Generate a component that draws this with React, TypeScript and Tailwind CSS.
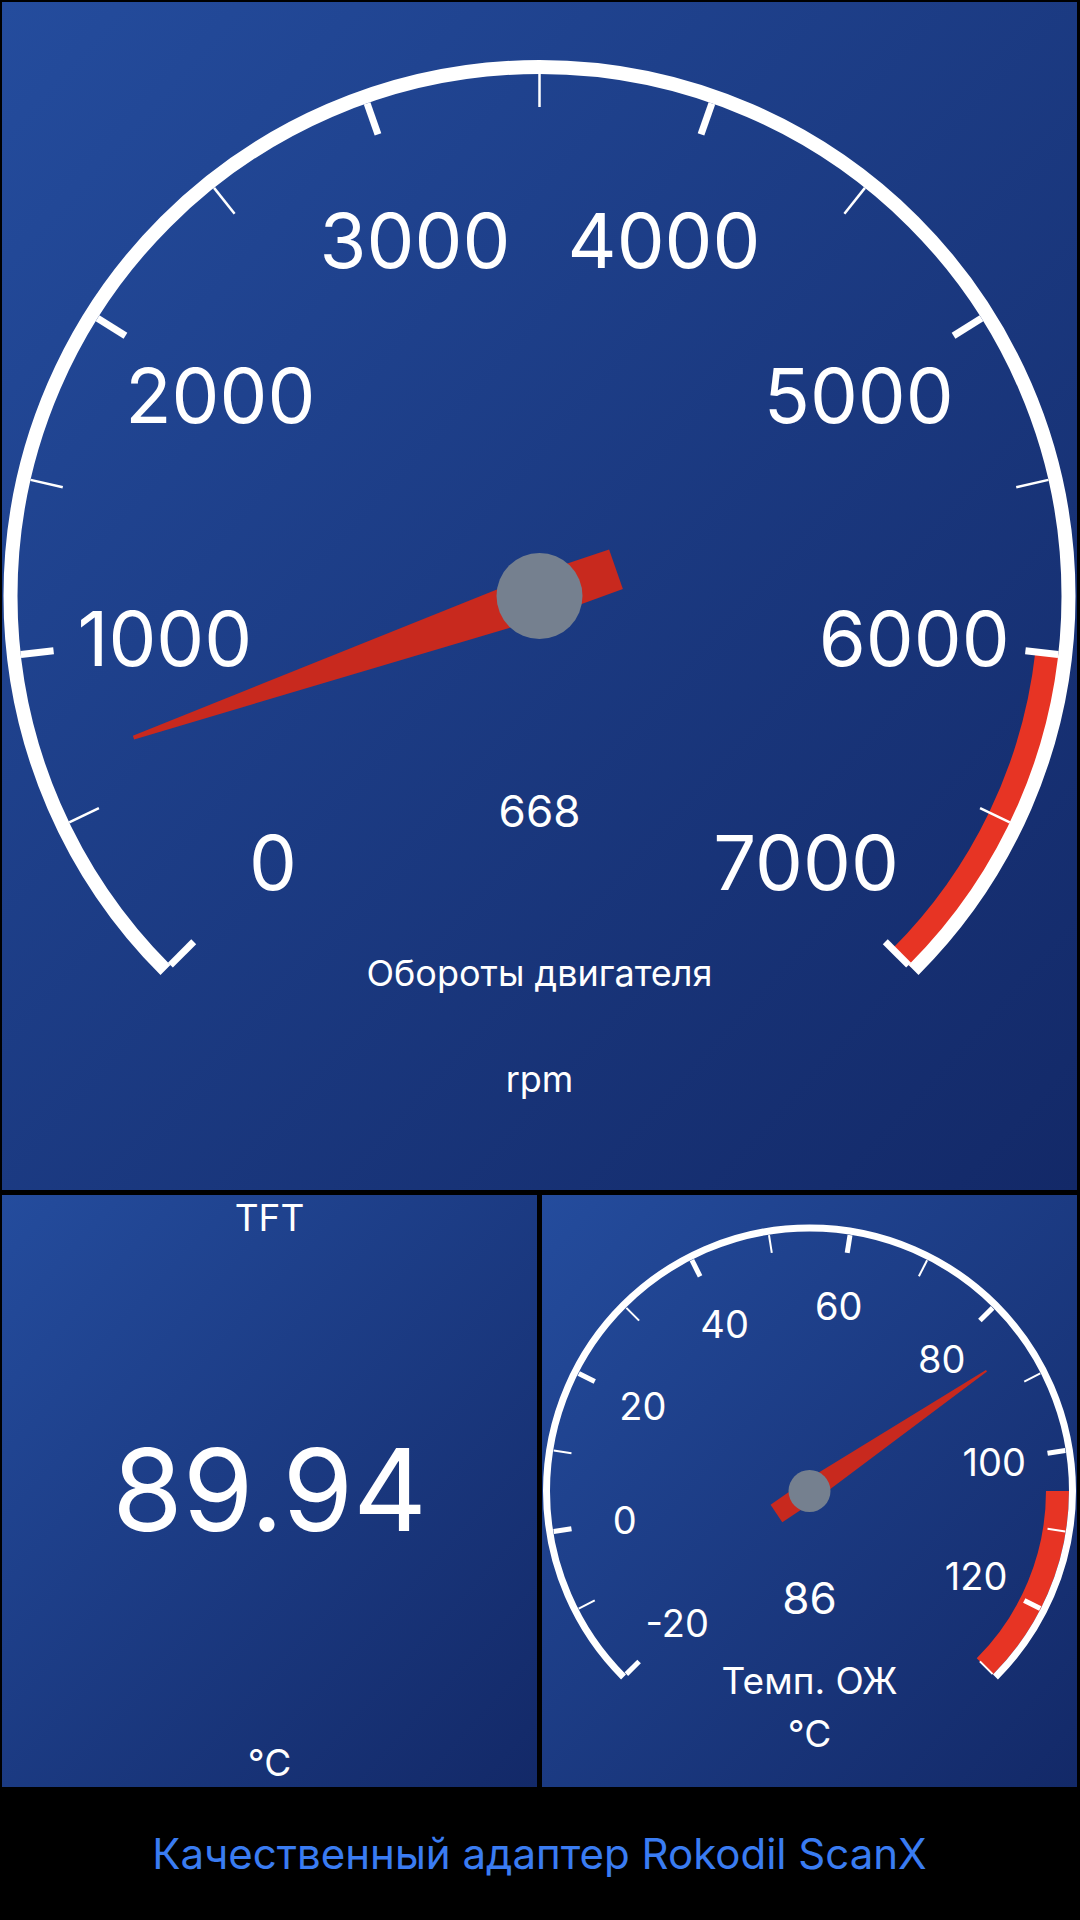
const rad = (d: number) => (d * Math.PI) / 180

type GaugeConfig = {
  w: number
  h: number
  r: number
  stroke: number
  min: number
  max: number
  step: number
  value: number
  redFrom: number
  redR: number
  redW: number
  tickIn: number
  tickOut: number
  majorW: number
  minorW: number
  labelR: number
  labelSize: number
  needleLen: number
  needleTail: number
  needleW: number
  hubR: number
  valueSize: number
  valueDy: number
  title: string
  titleSize: number
  titleDy: number
  unit: string
  unitDy: number
}

const Gauge = ({ g }: { g: GaugeConfig }) => {
  const cx = g.w / 2
  const cy = g.h / 2
  const ang = (v: number) => 225 - ((v - g.min) / (g.max - g.min)) * 270
  const pt = (r: number, a: number) => [cx + r * Math.cos(rad(a)), cy - r * Math.sin(rad(a))]
  const arc = (r: number, a0: number, a1: number) => {
    const [x0, y0] = pt(r, a0)
    const [x1, y1] = pt(r, a1)
    return `M ${x0} ${y0} A ${r} ${r} 0 ${a0 - a1 > 180 ? 1 : 0} 1 ${x1} ${y1}`
  }

  const count = Math.round((g.max - g.min) / g.step)
  const ticks = Array.from({ length: count + 1 }, (_, i) => ({ v: g.min + i * g.step, major: i % 2 === 0 }))

  // needle polygon in local coords (along, across)
  const a = ang(g.value)
  const u = [Math.cos(rad(a)), -Math.sin(rad(a))]
  const n = [Math.sin(rad(a)), Math.cos(rad(a))]
  const hw = g.needleW / 2
  const local = [
    [-g.needleTail, -hw * 0.95],
    [0, -hw],
    [g.needleLen, -hw * 0.09],
    [g.needleLen, hw * 0.09],
    [0, hw],
    [-g.needleTail, hw * 0.95],
  ]
  const needle = local.map(([s, t]) => `${cx + s * u[0] + t * n[0]},${cy + s * u[1] + t * n[1]}`).join(' ')

  return (
    <svg viewBox={`0 0 ${g.w} ${g.h}`} width={g.w} height={g.h} className="block">
      <path d={arc(g.redR, ang(g.redFrom), ang(g.max))} stroke="#e73424" strokeWidth={g.redW} fill="none" />
      <path d={arc(g.r, 225, -45)} stroke="white" strokeWidth={g.stroke} fill="none" />
      {ticks.map((t) => {
        const [x0, y0] = pt(g.tickIn, ang(t.v))
        const [x1, y1] = pt(g.tickOut, ang(t.v))
        return (
          <line key={t.v} x1={x0} y1={y0} x2={x1} y2={y1} stroke="white" strokeWidth={t.major ? g.majorW : g.minorW} />
        )
      })}
      {ticks
        .filter((t) => t.major)
        .map((t) => {
          const [x, y] = pt(g.labelR, ang(t.v))
          return (
            <text key={t.v} x={x} y={y + g.labelSize * 0.3635} fill="white" fontSize={g.labelSize} textAnchor="middle">
              {String(t.v)}
            </text>
          )
        })}
      <text x={cx} y={cy + g.valueDy} fill="white" fontSize={g.valueSize} textAnchor="middle">
        {Math.round(g.value)}
      </text>
      <text x={cx} y={cy + g.titleDy} fill="white" fontSize={g.titleSize} textAnchor="middle">
        {g.title}
      </text>
      <text x={cx} y={cy + g.unitDy} fill="white" fontSize={g.titleSize} textAnchor="middle">
        {g.unit}
      </text>
      <polygon points={needle} fill="#c8291e" />
      <circle cx={cx} cy={cy} r={g.hubR} fill="#75808f" />
    </svg>
  )
}

const rpm: GaugeConfig = {
  w: 1075,
  h: 1188,
  r: 529,
  stroke: 14,
  min: 0,
  max: 7000,
  step: 500,
  value: 668,
  redFrom: 6000,
  redR: 512,
  redW: 26,
  tickIn: 489,
  tickOut: 522,
  majorW: 7,
  minorW: 2.5,
  labelR: 377,
  labelSize: 76,
  needleLen: 430,
  needleTail: 81,
  needleW: 44,
  hubR: 43,
  valueSize: 44,
  valueDy: 231,
  title: 'Обороты двигателя',
  titleSize: 36,
  titleDy: 390,
  unit: 'rpm',
  unitDy: 496,
}

const coolant: GaugeConfig = {
  w: 535,
  h: 592,
  r: 263,
  stroke: 7,
  min: -20,
  max: 130,
  step: 10,
  value: 86,
  redFrom: 105,
  redR: 248,
  redW: 23,
  tickIn: 241,
  tickOut: 259,
  majorW: 5,
  minorW: 2,
  labelR: 187,
  labelSize: 38,
  needleLen: 214,
  needleTail: 40,
  needleW: 22,
  hubR: 21,
  valueSize: 44,
  valueDy: 123,
  title: 'Темп. ОЖ',
  titleSize: 37,
  titleDy: 203,
  unit: '°C',
  unitDy: 256,
}

const panel = 'bg-linear-to-br from-[#244c9d] to-[#132968] overflow-hidden'

export default function App() {
  return (
    <div className="w-[1080px] h-[1920px] bg-black flex flex-col pt-[2px] pl-[2px] pr-[3px] font-['Inter','Noto_Sans',sans-serif] text-white">
      <div className={`h-[1188px] ${panel}`}>
        <Gauge g={rpm} />
      </div>
      <div className="mt-[5px] h-[592px] flex gap-[5px]">
        <div className={`w-[535px] flex flex-col items-center justify-between pt-[4px] pb-[6px] ${panel}`}>
          <p className="text-[37px] leading-none">TFT</p>
          <p className="text-[114px] leading-none">89.94</p>
          <p className="text-[37px] leading-none">°C</p>
        </div>
        <div className={`w-[535px] ${panel}`}>
          <Gauge g={coolant} />
        </div>
      </div>
      <div className="flex-1 flex items-center justify-center">
        <p className="text-[42px] leading-none text-[#3a7cf2]">Качественный адаптер Rokodil ScanX</p>
      </div>
    </div>
  )
}
